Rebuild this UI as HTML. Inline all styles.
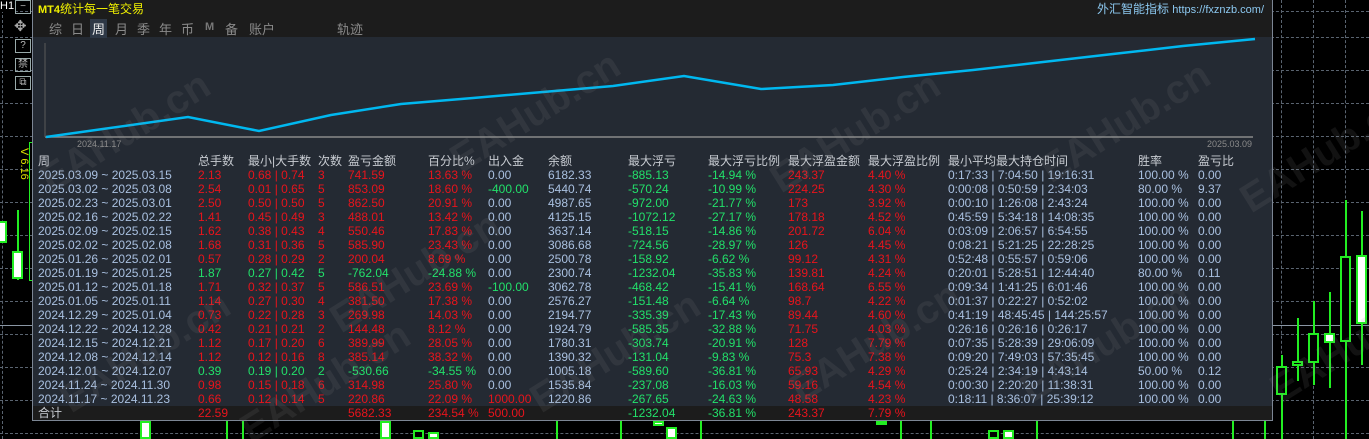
<!DOCTYPE html><html><head><meta charset="utf-8"><style>
*{margin:0;padding:0;box-sizing:border-box}
html,body{width:1369px;height:439px;overflow:hidden}
body{background:#000;font-family:"Liberation Sans","Noto Sans CJK SC",sans-serif;font-size:12px}
#root{position:relative;width:1369px;height:439px;overflow:hidden}
.a{position:absolute;white-space:nowrap}
.hg{position:absolute;left:0;width:1369px;border-top:1px dashed #5a6470}
.vg{position:absolute;top:0;height:439px;border-left:1px dashed #5a6470}
#panel{position:absolute;left:32px;top:0;width:1241px;height:421px;background:#242a33;border:1px solid #7c8694;border-top:none}
#hdr{position:absolute;left:0;top:0;width:1239px;height:37px;background:#1c1c1c}
.r{position:absolute;left:0;height:14px;line-height:14px;width:1239px}
.r span{position:absolute;top:0}
.b{color:#a9c0e0}.R{color:#e8141c}.G{color:#22e06a}.W{color:#c8ccd2}
.c0{left:5px}.c1{left:165px}.c2{left:215px}.c3{left:285px}.c4{left:315px}.c5{left:395px}.c6{left:455px}.c7{left:515px}.c8{left:595px}.c9{left:675px}.c10{left:755px}.c11{left:835px}.c12{left:915px}.c13{left:1105px}.c14{left:1165px}
#wms{position:absolute;left:0;top:0;width:1369px;height:439px;overflow:hidden}
.wm{position:absolute;font:bold 40px "Liberation Sans",sans-serif;color:rgba(150,150,150,0.12);transform:rotate(-32deg);white-space:nowrap}
.tab{position:absolute;top:19px;color:#8a8a8a;font-size:13px}
.ic{position:absolute;left:15px;width:16px;height:14px;border:1px solid #9aa;color:#bbb;font-size:10px;line-height:12px;text-align:center}
.cd{position:absolute;border:2px solid #22ee22;background:#fff}
.wk{position:absolute;width:2px;background:#22ee22}
</style></head><body><div id="root">
<div class="hg" style="top:11px"></div><div class="hg" style="top:37px"></div><div class="hg" style="top:70px"></div><div class="hg" style="top:103px"></div><div class="hg" style="top:136px"></div><div class="hg" style="top:169px"></div><div class="hg" style="top:202px"></div><div class="hg" style="top:235px"></div><div class="hg" style="top:268px"></div><div class="hg" style="top:301px"></div><div class="hg" style="top:334px"></div><div class="hg" style="top:367px"></div><div class="hg" style="top:400px"></div><div class="hg" style="top:433px"></div>
<div class="vg" style="left:2px"></div><div class="vg" style="left:1281px"></div><div class="vg" style="left:1313px"></div><div class="vg" style="left:1345px"></div>
<div class="a" style="left:0;top:325px;width:1369px;border-top:1px solid #8a96a4"></div>
<div class="a" style="left:0;top:0;color:#fff;font-size:11px;background:#000">H1</div>
<div class="ic" style="top:0">−</div>
<div class="a" style="left:14px;top:17px;color:#aaa;font-size:15px">✥</div>
<div class="ic" style="top:39px">?</div><div class="ic" style="top:58px">禁</div><div class="ic" style="top:76px">⧉</div>
<div class="a" style="left:29px;top:142px;width:4px;height:139px;border:1px solid #22ee22;border-right:none"></div>
<div class="a" style="top:148px;color:#e0e000;font-size:11px;transform:rotate(90deg);transform-origin:left top;left:30px">V 6.16</div>
<div class="wk" style="left:17px;top:210px;height:70px"></div>
<div class="cd" style="left:-2px;top:221px;width:9px;height:22px"></div>
<div class="cd" style="left:12px;top:251px;width:11px;height:28px"></div>
<div class="wk" style="left:1281px;top:355px;height:84px"></div><div class="cd" style="left:1276px;top:366px;width:11px;height:29px;background:#000"></div>
<div class="wk" style="left:1297px;top:318px;height:63px"></div><div class="cd" style="left:1292px;top:361px;width:11px;height:5px;background:#000"></div>
<div class="wk" style="left:1313px;top:301px;height:84px"></div><div class="cd" style="left:1308px;top:333px;width:11px;height:30px;background:#000"></div>
<div class="wk" style="left:1329px;top:292px;height:96px"></div><div class="cd" style="left:1324px;top:333px;width:11px;height:10px"></div>
<div class="wk" style="left:1345px;top:200px;height:239px"></div><div class="cd" style="left:1340px;top:256px;width:11px;height:86px;background:#000"></div>
<div class="wk" style="left:1361px;top:211px;height:154px"></div><div class="cd" style="left:1356px;top:255px;width:11px;height:69px"></div>
<div class="cd" style="left:140px;top:421px;width:11px;height:18px"></div>
<div class="cd" style="left:380px;top:421px;width:11px;height:18px"></div>
<div class="cd" style="left:413px;top:430px;width:11px;height:9px;background:#000"></div>
<div class="cd" style="left:428px;top:432px;width:11px;height:7px"></div>
<div class="cd" style="left:653px;top:421px;width:11px;height:5px"></div>
<div class="cd" style="left:666px;top:427px;width:11px;height:12px"></div>
<div class="cd" style="left:876px;top:421px;width:11px;height:4px"></div>
<div class="cd" style="left:988px;top:430px;width:11px;height:9px;background:#000"></div>
<div class="cd" style="left:1003px;top:430px;width:11px;height:9px"></div>
<div class="wk" style="left:226px;top:421px;height:18px"></div><div class="wk" style="left:242px;top:421px;height:18px"></div><div class="wk" style="left:556px;top:421px;height:18px"></div><div class="wk" style="left:620px;top:421px;height:18px"></div><div class="wk" style="left:700px;top:421px;height:18px"></div><div class="wk" style="left:900px;top:421px;height:18px"></div><div class="wk" style="left:930px;top:421px;height:18px"></div><div class="wk" style="left:1036px;top:421px;height:18px"></div><div class="wk" style="left:1232px;top:421px;height:18px"></div><div class="wk" style="left:1264px;top:421px;height:18px"></div>

<div id="panel">
<div id="hdr">
<div class="a" style="left:5px;top:0;color:#f0f000;font-size:12px"><b style="font-size:11px">MT4</b>统计每一笔交易</div>
<div class="a" style="right:8px;top:0;color:#8cc8f0;font-size:12px">外汇智能指标 <span style="font-size:11px">https://fxznzb.com/</span></div>
<span class="tab" style="left:16px">综</span><span class="tab" style="left:38px">日</span><span class="tab" style="color:#eee;background:#2e3846;padding:0 2px;left:57px">周</span><span class="tab" style="left:82px">月</span><span class="tab" style="left:104px">季</span><span class="tab" style="left:126px">年</span><span class="tab" style="left:148px">币</span><span class="tab" style="left:172px;font-size:11px;top:21px;color:#777"><b>M</b></span><span class="tab" style="left:192px">备</span><span class="tab" style="left:216px">账户</span><span class="tab" style="left:304px">轨迹</span>
</div>
<svg class="a" style="left:0;top:37px" width="1239" height="115">
<line x1="12" y1="100" x2="1220" y2="100" stroke="#8a8a8a" stroke-width="1.5"/>
<line x1="12" y1="6" x2="12" y2="100" stroke="#5a5a5a" stroke-width="1"/>
<polyline fill="none" stroke="#00b8f0" stroke-width="2.5" points="13,100 155,80 226,94 298,78 368,67 440,61 510,55 580,49 651,39 728,52 800,48 870,40 940,33 1010,25 1080,17 1150,9 1222,2"/>
<text x="44" y="110" fill="#8a8a8a" font-size="9" font-family="Liberation Sans">2024.11.17</text>
<text x="1174" y="110" fill="#8a8a8a" font-size="9" font-family="Liberation Sans">2025.03.09</text>
</svg>
<div class="r W" style="top:154px"><span class="c0">周</span><span class="c1">总手数</span><span class="c2">最小|大手数</span><span class="c3">次数</span><span class="c4">盈亏金额</span><span class="c5">百分比%</span><span class="c6">出入金</span><span class="c7">余额</span><span class="c8">最大浮亏</span><span class="c9">最大浮亏比例</span><span class="c10">最大浮盈金额</span><span class="c11">最大浮盈比例</span><span class="c12">最小平均最大持仓时间</span><span class="c13">胜率</span><span class="c14">盈亏比</span></div>
<div class="r" style="top:168px"><span class="c0 b">2025.03.09 ~ 2025.03.15</span><span class="c1 R">2.13</span><span class="c2 R">0.68 | 0.74</span><span class="c3 R">3</span><span class="c4 R">741.59</span><span class="c5 R">13.63 %</span><span class="c6 b">0.00</span><span class="c7 b">6182.33</span><span class="c8 G">-885.13</span><span class="c9 G">-14.94 %</span><span class="c10 R">243.37</span><span class="c11 R">4.40 %</span><span class="c12 b">0:17:33 | 7:04:50 | 19:16:31</span><span class="c13 b">100.00 %</span><span class="c14 b">0.00</span></div>
<div class="r" style="top:182px"><span class="c0 b">2025.03.02 ~ 2025.03.08</span><span class="c1 R">2.54</span><span class="c2 R">0.01 | 0.65</span><span class="c3 R">5</span><span class="c4 R">853.09</span><span class="c5 R">18.60 %</span><span class="c6 G">-400.00</span><span class="c7 b">5440.74</span><span class="c8 G">-570.24</span><span class="c9 G">-10.99 %</span><span class="c10 R">224.25</span><span class="c11 R">4.30 %</span><span class="c12 b">0:00:08 | 0:50:59 | 2:34:03</span><span class="c13 b">80.00 %</span><span class="c14 b">9.37</span></div>
<div class="r" style="top:196px"><span class="c0 b">2025.02.23 ~ 2025.03.01</span><span class="c1 R">2.50</span><span class="c2 R">0.50 | 0.50</span><span class="c3 R">5</span><span class="c4 R">862.50</span><span class="c5 R">20.91 %</span><span class="c6 b">0.00</span><span class="c7 b">4987.65</span><span class="c8 G">-972.00</span><span class="c9 G">-21.77 %</span><span class="c10 R">173</span><span class="c11 R">3.92 %</span><span class="c12 b">0:00:10 | 1:26:08 | 2:43:24</span><span class="c13 b">100.00 %</span><span class="c14 b">0.00</span></div>
<div class="r" style="top:210px"><span class="c0 b">2025.02.16 ~ 2025.02.22</span><span class="c1 R">1.41</span><span class="c2 R">0.45 | 0.49</span><span class="c3 R">3</span><span class="c4 R">488.01</span><span class="c5 R">13.42 %</span><span class="c6 b">0.00</span><span class="c7 b">4125.15</span><span class="c8 G">-1072.12</span><span class="c9 G">-27.17 %</span><span class="c10 R">178.18</span><span class="c11 R">4.52 %</span><span class="c12 b">0:45:59 | 5:34:18 | 14:08:35</span><span class="c13 b">100.00 %</span><span class="c14 b">0.00</span></div>
<div class="r" style="top:224px"><span class="c0 b">2025.02.09 ~ 2025.02.15</span><span class="c1 R">1.62</span><span class="c2 R">0.38 | 0.43</span><span class="c3 R">4</span><span class="c4 R">550.46</span><span class="c5 R">17.83 %</span><span class="c6 b">0.00</span><span class="c7 b">3637.14</span><span class="c8 G">-518.15</span><span class="c9 G">-14.86 %</span><span class="c10 R">201.72</span><span class="c11 R">6.04 %</span><span class="c12 b">0:03:09 | 2:06:57 | 6:54:55</span><span class="c13 b">100.00 %</span><span class="c14 b">0.00</span></div>
<div class="r" style="top:238px"><span class="c0 b">2025.02.02 ~ 2025.02.08</span><span class="c1 R">1.68</span><span class="c2 R">0.31 | 0.36</span><span class="c3 R">5</span><span class="c4 R">585.90</span><span class="c5 R">23.43 %</span><span class="c6 b">0.00</span><span class="c7 b">3086.68</span><span class="c8 G">-724.56</span><span class="c9 G">-28.97 %</span><span class="c10 R">126</span><span class="c11 R">4.45 %</span><span class="c12 b">0:08:21 | 5:21:25 | 22:28:25</span><span class="c13 b">100.00 %</span><span class="c14 b">0.00</span></div>
<div class="r" style="top:252px"><span class="c0 b">2025.01.26 ~ 2025.02.01</span><span class="c1 R">0.57</span><span class="c2 R">0.28 | 0.29</span><span class="c3 R">2</span><span class="c4 R">200.04</span><span class="c5 R">8.69 %</span><span class="c6 b">0.00</span><span class="c7 b">2500.78</span><span class="c8 G">-158.92</span><span class="c9 G">-6.62 %</span><span class="c10 R">99.12</span><span class="c11 R">4.31 %</span><span class="c12 b">0:52:48 | 0:55:57 | 0:59:06</span><span class="c13 b">100.00 %</span><span class="c14 b">0.00</span></div>
<div class="r" style="top:266px"><span class="c0 b">2025.01.19 ~ 2025.01.25</span><span class="c1 G">1.87</span><span class="c2 G">0.27 | 0.42</span><span class="c3 G">5</span><span class="c4 G">-762.04</span><span class="c5 G">-24.88 %</span><span class="c6 b">0.00</span><span class="c7 b">2300.74</span><span class="c8 G">-1232.04</span><span class="c9 G">-35.83 %</span><span class="c10 R">139.81</span><span class="c11 R">4.24 %</span><span class="c12 b">0:20:01 | 5:28:51 | 12:44:40</span><span class="c13 b">80.00 %</span><span class="c14 b">0.11</span></div>
<div class="r" style="top:280px"><span class="c0 b">2025.01.12 ~ 2025.01.18</span><span class="c1 R">1.71</span><span class="c2 R">0.32 | 0.37</span><span class="c3 R">5</span><span class="c4 R">586.51</span><span class="c5 R">23.69 %</span><span class="c6 G">-100.00</span><span class="c7 b">3062.78</span><span class="c8 G">-468.42</span><span class="c9 G">-15.41 %</span><span class="c10 R">168.64</span><span class="c11 R">6.55 %</span><span class="c12 b">0:09:34 | 1:41:25 | 6:01:46</span><span class="c13 b">100.00 %</span><span class="c14 b">0.00</span></div>
<div class="r" style="top:294px"><span class="c0 b">2025.01.05 ~ 2025.01.11</span><span class="c1 R">1.14</span><span class="c2 R">0.27 | 0.30</span><span class="c3 R">4</span><span class="c4 R">381.50</span><span class="c5 R">17.38 %</span><span class="c6 b">0.00</span><span class="c7 b">2576.27</span><span class="c8 G">-151.48</span><span class="c9 G">-6.64 %</span><span class="c10 R">98.7</span><span class="c11 R">4.22 %</span><span class="c12 b">0:01:37 | 0:22:27 | 0:52:02</span><span class="c13 b">100.00 %</span><span class="c14 b">0.00</span></div>
<div class="r" style="top:308px"><span class="c0 b">2024.12.29 ~ 2025.01.04</span><span class="c1 R">0.73</span><span class="c2 R">0.22 | 0.28</span><span class="c3 R">3</span><span class="c4 R">269.98</span><span class="c5 R">14.03 %</span><span class="c6 b">0.00</span><span class="c7 b">2194.77</span><span class="c8 G">-335.39</span><span class="c9 G">-17.43 %</span><span class="c10 R">89.44</span><span class="c11 R">4.60 %</span><span class="c12 b">0:41:19 | 48:45:45 | 144:25:57</span><span class="c13 b">100.00 %</span><span class="c14 b">0.00</span></div>
<div class="r" style="top:322px"><span class="c0 b">2024.12.22 ~ 2024.12.28</span><span class="c1 R">0.42</span><span class="c2 R">0.21 | 0.21</span><span class="c3 R">2</span><span class="c4 R">144.48</span><span class="c5 R">8.12 %</span><span class="c6 b">0.00</span><span class="c7 b">1924.79</span><span class="c8 G">-585.35</span><span class="c9 G">-32.88 %</span><span class="c10 R">71.75</span><span class="c11 R">4.03 %</span><span class="c12 b">0:26:16 | 0:26:16 | 0:26:17</span><span class="c13 b">100.00 %</span><span class="c14 b">0.00</span></div>
<div class="r" style="top:336px"><span class="c0 b">2024.12.15 ~ 2024.12.21</span><span class="c1 R">1.12</span><span class="c2 R">0.17 | 0.20</span><span class="c3 R">6</span><span class="c4 R">389.99</span><span class="c5 R">28.05 %</span><span class="c6 b">0.00</span><span class="c7 b">1780.31</span><span class="c8 G">-303.74</span><span class="c9 G">-20.91 %</span><span class="c10 R">128</span><span class="c11 R">7.79 %</span><span class="c12 b">0:07:35 | 5:28:39 | 29:06:09</span><span class="c13 b">100.00 %</span><span class="c14 b">0.00</span></div>
<div class="r" style="top:350px"><span class="c0 b">2024.12.08 ~ 2024.12.14</span><span class="c1 R">1.12</span><span class="c2 R">0.12 | 0.16</span><span class="c3 R">8</span><span class="c4 R">385.14</span><span class="c5 R">38.32 %</span><span class="c6 b">0.00</span><span class="c7 b">1390.32</span><span class="c8 G">-131.04</span><span class="c9 G">-9.83 %</span><span class="c10 R">75.3</span><span class="c11 R">7.38 %</span><span class="c12 b">0:09:20 | 7:49:03 | 57:35:45</span><span class="c13 b">100.00 %</span><span class="c14 b">0.00</span></div>
<div class="r" style="top:364px"><span class="c0 b">2024.12.01 ~ 2024.12.07</span><span class="c1 G">0.39</span><span class="c2 G">0.19 | 0.20</span><span class="c3 G">2</span><span class="c4 G">-530.66</span><span class="c5 G">-34.55 %</span><span class="c6 b">0.00</span><span class="c7 b">1005.18</span><span class="c8 G">-589.60</span><span class="c9 G">-36.81 %</span><span class="c10 R">65.93</span><span class="c11 R">4.29 %</span><span class="c12 b">0:25:24 | 2:34:19 | 4:43:14</span><span class="c13 b">50.00 %</span><span class="c14 b">0.12</span></div>
<div class="r" style="top:378px"><span class="c0 b">2024.11.24 ~ 2024.11.30</span><span class="c1 R">0.98</span><span class="c2 R">0.15 | 0.18</span><span class="c3 R">6</span><span class="c4 R">314.98</span><span class="c5 R">25.80 %</span><span class="c6 b">0.00</span><span class="c7 b">1535.84</span><span class="c8 G">-237.08</span><span class="c9 G">-16.03 %</span><span class="c10 R">59.16</span><span class="c11 R">4.54 %</span><span class="c12 b">0:00:30 | 2:20:20 | 11:38:31</span><span class="c13 b">100.00 %</span><span class="c14 b">0.00</span></div>
<div class="r" style="top:392px"><span class="c0 b">2024.11.17 ~ 2024.11.23</span><span class="c1 R">0.66</span><span class="c2 R">0.12 | 0.14</span><span class="c3 R">5</span><span class="c4 R">220.86</span><span class="c5 R">22.09 %</span><span class="c6 R">1000.00</span><span class="c7 b">1220.86</span><span class="c8 G">-267.65</span><span class="c9 G">-24.63 %</span><span class="c10 R">48.58</span><span class="c11 R">4.23 %</span><span class="c12 b">0:18:11 | 8:36:07 | 25:39:12</span><span class="c13 b">100.00 %</span><span class="c14 b">0.00</span></div>
<div class="r" style="top:406px;height:14px;background:#1c1c1c"><span class="c0 W">合计</span><span class="c1 R">22.59</span><span class="c4 R">5682.33</span><span class="c5 R">234.54 %</span><span class="c6 R">500.00</span><span class="c8 G">-1232.04</span><span class="c9 G">-36.81 %</span><span class="c10 R">243.37</span><span class="c11 R">7.79 %</span></div>
</div>
<div id="wms">
<div class="wm" style="left:30px;top:110px">EAHub.cn</div>
<div class="wm" style="left:50px;top:330px">EAHub.cn</div>
<div class="wm" style="left:320px;top:250px">EAHub.cn</div>
<div class="wm" style="left:440px;top:90px">EAHub.cn</div>
<div class="wm" style="left:230px;top:360px">EAHub.cn</div>
<div class="wm" style="left:520px;top:330px">EAHub.cn</div>
<div class="wm" style="left:760px;top:110px">EAHub.cn</div>
<div class="wm" style="left:780px;top:320px">EAHub.cn</div>
<div class="wm" style="left:1030px;top:100px">EAHub.cn</div>
<div class="wm" style="left:1010px;top:320px">EAHub.cn</div>
<div class="wm" style="left:1230px;top:130px">EAHub.cn</div>
<div class="wm" style="left:1260px;top:320px">EAHub.cn</div>
</div>
</div></body></html>
